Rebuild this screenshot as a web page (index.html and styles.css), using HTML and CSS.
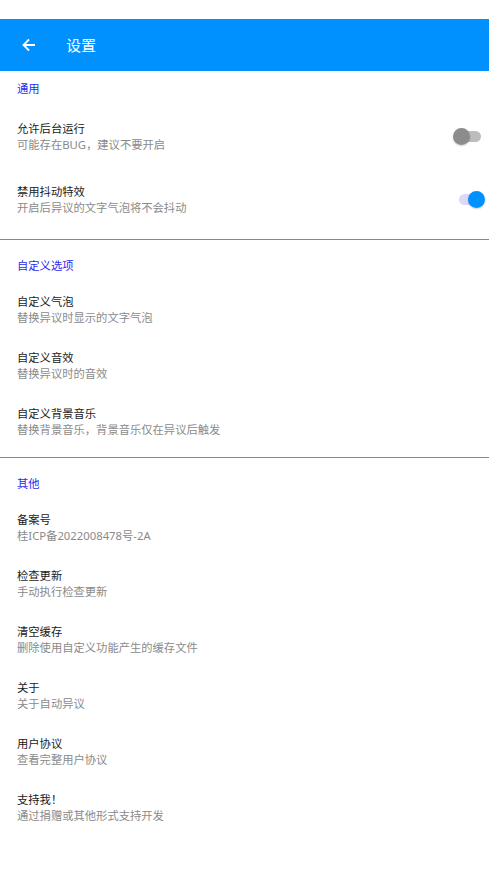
FILE: index.html
```html
<!DOCTYPE html>
<html>
<head>
    <meta name="viewport" content="width=device-width, initial-scale=1.0">
    <link rel="stylesheet" href="styles.css">
</head>
<body>
<div id="status"></div>
<div id="bar">
    <svg class="back" width="14" height="14" viewBox="0 0 14 14">
        <path d="M13 7H2M7 1.5L1.5 7L7 12.5" fill="none" stroke="#fff" stroke-width="1.8"/>
    </svg>
    <span class="title">设置</span>
</div>

<div class="section first">
    <div class="head">通用</div>
    <div class="item sw">
        <div class="text">
            <div class="name">允许后台运行</div>
            <div class="sub">可能存在BUG，建议不要开启</div>
        </div>
        <div class="switch"><div class="track"></div><div class="thumb"></div></div>
    </div>
    <div class="item sw">
        <div class="text">
            <div class="name">禁用抖动特效</div>
            <div class="sub">开启后异议的文字气泡将不会抖动</div>
        </div>
        <div class="switch on"><div class="track"></div><div class="thumb"></div></div>
    </div>
</div>

<div class="section">
    <div class="head">自定义选项</div>
    <div class="item">
        <div class="name">自定义气泡</div>
        <div class="sub">替换异议时显示的文字气泡</div>
    </div>
    <div class="item">
        <div class="name">自定义音效</div>
        <div class="sub">替换异议时的音效</div>
    </div>
    <div class="item">
        <div class="name">自定义背景音乐</div>
        <div class="sub">替换背景音乐，背景音乐仅在异议后触发</div>
    </div>
</div>

<div class="section">
    <div class="head">其他</div>
    <div class="item">
        <div class="name">备案号</div>
        <div class="sub">桂ICP备2022008478号-2A</div>
    </div>
    <div class="item">
        <div class="name">检查更新</div>
        <div class="sub">手动执行检查更新</div>
    </div>
    <div class="item">
        <div class="name">清空缓存</div>
        <div class="sub">删除使用自定义功能产生的缓存文件</div>
    </div>
    <div class="item">
        <div class="name">关于</div>
        <div class="sub">关于自动异议</div>
    </div>
    <div class="item">
        <div class="name">用户协议</div>
        <div class="sub">查看完整用户协议</div>
    </div>
    <div class="item">
        <div class="name">支持我！</div>
        <div class="sub">通过捐赠或其他形式支持开发</div>
    </div>
</div>
</body>
</html>
```

FILE: styles.css
```css
body {
    margin: 0;
    background: #fff;
    font-family: "Noto Sans", "Noto Sans CJK SC", sans-serif;
    font-size: 11.3px;
    line-height: 16px;
}

#status {
    height: 19px;
}

#bar {
    height: 52px;
    background-color: #0091ff;
    display: flex;
    align-items: center;
    padding-left: 22px;
}

#bar .back {
    display: block;
}

#bar .title {
    margin-left: 30px;
    color: #fff;
    font-size: 15px;
    line-height: 20px;
}

.section {
    padding-bottom: 7px;
    border-top: 1px solid #888;
}

.section.first {
    border-top: none;
    padding-bottom: 8px;
}

.head {
    padding: 18px 17px 8px;
    color: #2a2af2;
}

.first .head {
    padding-top: 10px;
}

.item {
    padding: 12px 17px;
}

.item.sw {
    padding-top: 15.5px;
    padding-bottom: 15.5px;
    display: flex;
    align-items: center;
    justify-content: space-between;
}

.name {
    color: #1a1a1a;
}

.sub {
    color: #8a8a8a;
}

.switch {
    position: relative;
    width: 30px;
    height: 17px;
    margin-right: -11px;
}

.track {
    position: absolute;
    left: 6px;
    top: 3px;
    width: 22px;
    height: 11px;
    border-radius: 6px;
    background: #bdbdbd;
}

.thumb {
    position: absolute;
    left: 0;
    top: 0;
    width: 17px;
    height: 17px;
    border-radius: 50%;
    background: #8c8c8c;
    box-shadow: 0 1px 2px rgba(0, 0, 0, 0.2);
}

.switch.on .track {
    background: #ddd8f6;
}

.switch.on .thumb {
    left: 15px;
    background: #0091ff;
}
```
